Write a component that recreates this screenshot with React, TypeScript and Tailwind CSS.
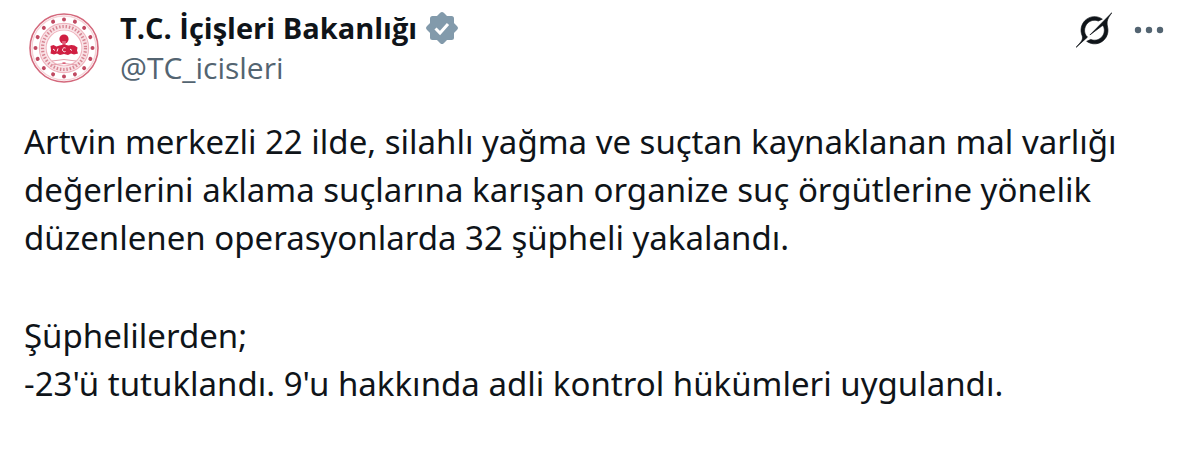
const ring = (count: number) => Array.from({ length: count }, (_, i) => (i * 360) / count);

function Emblem() {
  return (
    <svg viewBox="0 0 72 72" className="size-[72px] shrink-0" role="img" aria-label="T.C. İçişleri Bakanlığı">
      <circle cx="36" cy="36" r="34" fill="#fff" stroke="#d4687c" strokeWidth="1.6" />
      <circle cx="36" cy="36" r="32" fill="none" stroke="#f6d3d8" strokeWidth="1.4" />
      {ring(16).map(angle => (
        <circle key={angle} cx="36" cy="7.5" r="2" fill="#c04a62" transform={`rotate(${angle} 36 36)`} />
      ))}
      <circle cx="36" cy="36" r="24.5" fill="none" stroke="#f0b5bf" strokeWidth="1.4" />
      <circle cx="36" cy="36" r="21.5" fill="none" stroke="#f8dfe3" strokeWidth="5" />
      <circle cx="36" cy="36" r="21.5" fill="none" stroke="#d78492" strokeWidth="3.2" strokeDasharray="1.4 1.9" />
      <circle cx="36" cy="36" r="18" fill="#fff" stroke="#f0b5bf" strokeWidth="1.2" />
      <circle cx="36" cy="27" r="4.6" fill="#d01f42" />
      <path d="M34 29h4l-.5 4h-3z" fill="#e2607a" />
      <path d="M22.500 34l3-1 3 1.500 3-1 4.500-1 4.500 1 3-.5 3 .5 3 2-.5 3 1 3-4 1-3-1-3 1.500-4-1-4 1-3-1.500-3 1-3.500-1 .5-3z" fill="#d01f42" />
      <path d="M25 37l2 1.500M30 36.500l-1 3M37.500 36a2 2 0 1 0 0 3.500M42 37l2 1.500" fill="none" stroke="#fff" strokeWidth="1" />
      <path d="M24 49q12-3 24 0M23 53q13-3 26 0" fill="none" stroke="#e4a0ac" strokeWidth="1" />
      <path d="M34.500 51h3" stroke="#d01f42" strokeWidth="1" />
    </svg>
  );
}

function VerifiedBadge() {
  return (
    <svg viewBox="0 0 34 34" className="size-[34px] shrink-0" role="img" aria-label="Onaylanmış hesap">
      <rect x="5" y="5" width="24" height="24" rx="2.500" fill="#829aab" />
      <rect x="5" y="5" width="24" height="24" rx="2.500" fill="#829aab" transform="rotate(45 17 17)" />
      <path d="M10.500 17.500l4.500 4.500 8-9" fill="none" stroke="#fff" strokeWidth="3" />
    </svg>
  );
}

function GrokIcon() {
  return (
    <svg viewBox="0 0 33 32" className="size-9" fill="#0f1419" stroke="#0f1419" strokeWidth="0.6" aria-hidden="true">
      <path d="M12.745 20.54l10.97-8.19c.539-.4 1.307-.244 1.564.38 1.349 3.288.746 7.241-1.938 9.955-2.683 2.714-6.417 3.31-9.83 1.954l-3.728 1.745c5.347 3.697 11.84 2.782 15.898-1.324 3.219-3.255 4.216-7.692 3.284-11.693l.008.009c-1.351-5.878.332-8.227 3.782-13.031L33 0l-4.54 4.59v-.014L12.743 20.544m-2.263 1.987c-3.837-3.707-3.175-9.446.1-12.755 2.42-2.449 6.388-3.448 9.852-1.979l3.72-1.737c-.67-.49-1.53-1.017-2.515-1.387-4.455-1.854-9.789-.931-13.41 2.728-3.483 3.523-4.579 8.94-2.697 13.561 1.405 3.454-.899 5.898-3.22 8.364C1.49 30.2.666 31.074 0 32l10.478-9.466" />
    </svg>
  );
}

function MoreIcon() {
  return (
    <svg viewBox="0 0 30 30" className="size-[30px]" fill="#536471" aria-hidden="true">
      <circle cx="4" cy="15" r="3.200" />
      <circle cx="15" cy="15" r="3.200" />
      <circle cx="26" cy="15" r="3.200" />
    </svg>
  );
}

const paragraphs = [
  [
    'Artvin merkezli 22 ilde, silahlı yağma ve suçtan kaynaklanan mal varlığı',
    'değerlerini aklama suçlarına karışan organize suç örgütlerine yönelik',
    'düzenlenen operasyonlarda 32 şüpheli yakalandı.',
  ],
  ['Şüphelilerden;', "-23'ü tutuklandı. 9'u hakkında adli kontrol hükümleri uygulandı."],
];

export default function App() {
  return (
    <article className="min-h-screen bg-white px-6 pt-2 text-[#0f1419]">
      <header className="flex items-start font-['Open_Sans',sans-serif]">
        <div className="flex flex-1 gap-5">
          <div className="pt-1 pl-1">
            <Emblem />
          </div>
          <div>
            <div className="flex h-10 items-center gap-2">
              <a href="#profile" className="text-[29px] leading-10 font-bold whitespace-nowrap">
                T.C. İçişleri Bakanlığı
              </a>
              <VerifiedBadge />
            </div>
            <a href="#profile" className="block text-[30px] leading-10 text-[#536471]">
              @TC_icisleri
            </a>
          </div>
        </div>
        <div className="flex items-center gap-[22px] pt-1 pr-3">
          <button type="button" aria-label="Grok">
            <GrokIcon />
          </button>
          <button type="button" aria-label="Diğer">
            <MoreIcon />
          </button>
        </div>
      </header>

      <div className="mt-[30px] space-y-[50px] font-['Noto_Sans',sans-serif] text-[33px] leading-12">
        {paragraphs.map(lines => (
          <p key={lines[0]}>
            {lines.map(line => (
              <span key={line} className="block whitespace-nowrap">
                {line}
              </span>
            ))}
          </p>
        ))}
      </div>
    </article>
  );
}
